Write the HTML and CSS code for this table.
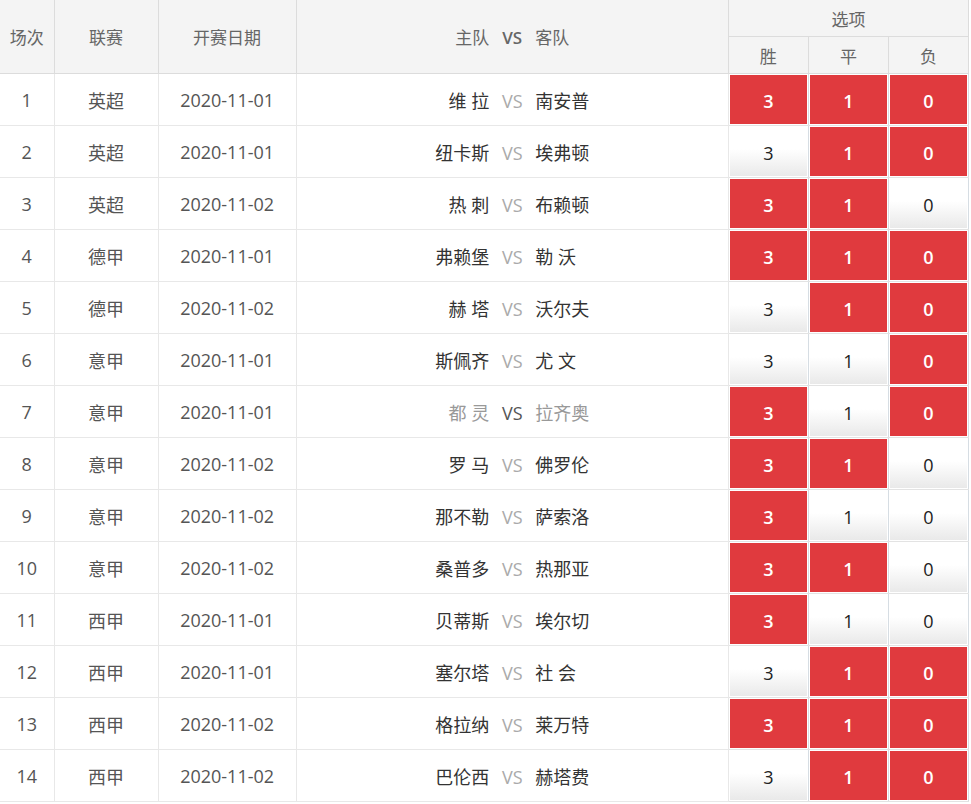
FILE: index.html
```html
<!DOCTYPE html>
<html lang="zh">
<head>
<meta charset="utf-8">
<link rel="stylesheet" href="styles.css">
</head>
<body>
<table class="board">
  <colgroup>
    <col class="c-no"><col class="c-lg"><col class="c-dt"><col class="c-tm"><col class="c-op"><col class="c-op"><col class="c-op">
  </colgroup>
  <thead>
    <tr>
      <th rowspan="2">场次</th>
      <th rowspan="2">联赛</th>
      <th rowspan="2">开赛日期</th>
      <th rowspan="2" class="th-team"><span class="t-home">主队</span><span class="t-vs">VS</span><span class="t-away">客队</span></th>
      <th colspan="3" class="th-opt">选项</th>
    </tr>
    <tr class="sub">
      <th>胜</th><th>平</th><th>负</th>
    </tr>
  </thead>
  <tbody>
    <tr><td>1</td><td>英超</td><td>2020-11-01</td><td class="team"><span class="home">维 拉</span><span class="vs">VS</span><span class="away">南安普</span></td><td class="opt"><span class="b on">3</span></td><td class="opt"><span class="b on">1</span></td><td class="opt"><span class="b on">0</span></td></tr>
    <tr><td>2</td><td>英超</td><td>2020-11-01</td><td class="team"><span class="home">纽卡斯</span><span class="vs">VS</span><span class="away">埃弗顿</span></td><td class="opt"><span class="b">3</span></td><td class="opt"><span class="b on">1</span></td><td class="opt"><span class="b on">0</span></td></tr>
    <tr><td>3</td><td>英超</td><td>2020-11-02</td><td class="team"><span class="home">热 刺</span><span class="vs">VS</span><span class="away">布赖顿</span></td><td class="opt"><span class="b on">3</span></td><td class="opt"><span class="b on">1</span></td><td class="opt"><span class="b">0</span></td></tr>
    <tr><td>4</td><td>德甲</td><td>2020-11-01</td><td class="team"><span class="home">弗赖堡</span><span class="vs">VS</span><span class="away">勒 沃</span></td><td class="opt"><span class="b on">3</span></td><td class="opt"><span class="b on">1</span></td><td class="opt"><span class="b on">0</span></td></tr>
    <tr><td>5</td><td>德甲</td><td>2020-11-02</td><td class="team"><span class="home">赫 塔</span><span class="vs">VS</span><span class="away">沃尔夫</span></td><td class="opt"><span class="b">3</span></td><td class="opt"><span class="b on">1</span></td><td class="opt"><span class="b on">0</span></td></tr>
    <tr><td>6</td><td>意甲</td><td>2020-11-01</td><td class="team"><span class="home">斯佩齐</span><span class="vs">VS</span><span class="away">尤 文</span></td><td class="opt"><span class="b">3</span></td><td class="opt"><span class="b">1</span></td><td class="opt"><span class="b on">0</span></td></tr>
    <tr class="muted"><td>7</td><td>意甲</td><td>2020-11-01</td><td class="team"><span class="home">都 灵</span><span class="vs">VS</span><span class="away">拉齐奥</span></td><td class="opt"><span class="b on">3</span></td><td class="opt"><span class="b">1</span></td><td class="opt"><span class="b on">0</span></td></tr>
    <tr><td>8</td><td>意甲</td><td>2020-11-02</td><td class="team"><span class="home">罗 马</span><span class="vs">VS</span><span class="away">佛罗伦</span></td><td class="opt"><span class="b on">3</span></td><td class="opt"><span class="b on">1</span></td><td class="opt"><span class="b">0</span></td></tr>
    <tr><td>9</td><td>意甲</td><td>2020-11-02</td><td class="team"><span class="home">那不勒</span><span class="vs">VS</span><span class="away">萨索洛</span></td><td class="opt"><span class="b on">3</span></td><td class="opt"><span class="b">1</span></td><td class="opt"><span class="b">0</span></td></tr>
    <tr><td>10</td><td>意甲</td><td>2020-11-02</td><td class="team"><span class="home">桑普多</span><span class="vs">VS</span><span class="away">热那亚</span></td><td class="opt"><span class="b on">3</span></td><td class="opt"><span class="b on">1</span></td><td class="opt"><span class="b">0</span></td></tr>
    <tr><td>11</td><td>西甲</td><td>2020-11-01</td><td class="team"><span class="home">贝蒂斯</span><span class="vs">VS</span><span class="away">埃尔切</span></td><td class="opt"><span class="b on">3</span></td><td class="opt"><span class="b">1</span></td><td class="opt"><span class="b">0</span></td></tr>
    <tr><td>12</td><td>西甲</td><td>2020-11-01</td><td class="team"><span class="home">塞尔塔</span><span class="vs">VS</span><span class="away">社 会</span></td><td class="opt"><span class="b">3</span></td><td class="opt"><span class="b on">1</span></td><td class="opt"><span class="b on">0</span></td></tr>
    <tr><td>13</td><td>西甲</td><td>2020-11-02</td><td class="team"><span class="home">格拉纳</span><span class="vs">VS</span><span class="away">莱万特</span></td><td class="opt"><span class="b on">3</span></td><td class="opt"><span class="b on">1</span></td><td class="opt"><span class="b on">0</span></td></tr>
    <tr><td>14</td><td>西甲</td><td>2020-11-02</td><td class="team"><span class="home">巴伦西</span><span class="vs">VS</span><span class="away">赫塔费</span></td><td class="opt"><span class="b">3</span></td><td class="opt"><span class="b on">1</span></td><td class="opt"><span class="b on">0</span></td></tr>
  </tbody>
</table>
</body>
</html>
```

FILE: styles.css
```css
html, body {
  margin: 0;
  padding: 0;
  background: #fff;
}
body {
  font-family: "Open Sans", "Noto Sans CJK SC", sans-serif;
  overflow: hidden;
}
.board {
  border-collapse: collapse;
  table-layout: fixed;
  width: 969px;
  border-right: 1px solid #ddd;
}
.c-no { width: 54px; }
.c-lg { width: 104px; }
.c-dt { width: 138px; }
.c-tm { width: 432px; }
.c-op { width: 80px; }

.board th {
  background: #f4f4f4;
  color: #666;
  font-weight: normal;
  font-size: 17px;
  height: 36px;
  padding: 0;
  border: 1px solid #dcdcdc;
  border-top: 0;
  text-align: center;
}
.board thead tr:first-child th:first-child { border-left: 0; }
.board th.th-opt { height: 36px; }
.board .sub th { height: 36px; }

.th-team, .team {
  white-space: nowrap;
}
.t-home, .home {
  display: inline-block;
  width: 190px;
  text-align: right;
}
.t-vs, .vs {
  display: inline-block;
  width: 46px;
  text-align: center;
}
.t-away, .away {
  display: inline-block;
  width: 190px;
  text-align: left;
}
.t-vs { font-weight: 600; color: #666; }

.board td {
  height: 51px;
  padding: 0;
  border: 1px solid #e8e8e8;
  text-align: center;
  font-size: 18px;
  color: #555;
}
.board tbody tr td:first-child { border-left: 0; }
.board td.team { color: #333; }
.board td.team .vs { color: #aaa; }
.board tr.muted td.team { color: #999; }
.board tr.muted td.team .vs { color: #555; }

.board td.opt {
  border-color: #e3e3e3;
  border-left-color: #d6dde3;
  border-right-color: #d6dde3;
  vertical-align: middle;
}
.b {
  display: flex;
  align-items: center;
  justify-content: center;
  height: 49px;
  margin: 1px;
  color: #222;
  font-size: 18px;
  padding-top: 3px;
  box-sizing: border-box;
  background: linear-gradient(to bottom, #fff 0%, #fff 45%, #e9e9e9 100%);
}
.b.on {
  background: #e03a3e;
  color: #fff;
  font-weight: 600;
}
```
